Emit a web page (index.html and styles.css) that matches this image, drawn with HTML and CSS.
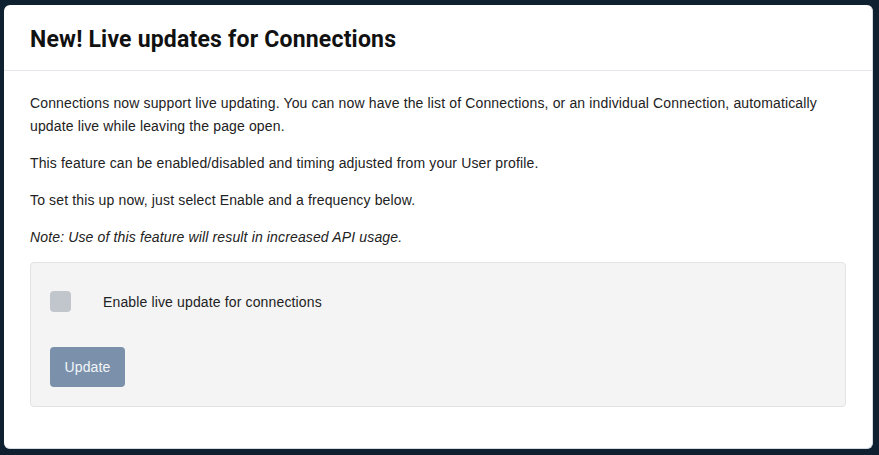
FILE: index.html
```html
<!DOCTYPE html>
<html lang="en">
<head>
    <meta charset="UTF-8">
    <meta name="viewport" content="width=device-width, initial-scale=1.0">
    <title>New! Live updates for Connections</title>
    <link rel="stylesheet" href="styles.css">
</head>
<body>
    <div class="modal">
        <div class="modal-header">
            <h1>New! Live updates for Connections</h1>
        </div>
        <div class="modal-body">
            <p>Connections now support live updating. You can now have the list of Connections, or an individual Connection, automatically update live while leaving the page open.</p>
            <p>This feature can be enabled/disabled and timing adjusted from your User profile.</p>
            <p>To set this up now, just select Enable and a frequency below.</p>
            <p class="note">Note: Use of this feature will result in increased API usage.</p>

            <div class="well">
                <label class="check-row">
                    <span class="checkbox"></span>
                    <span>Enable live update for connections</span>
                </label>
                <button class="btn-update">Update</button>
            </div>
        </div>
    </div>
</body>
</html>
```

FILE: styles.css
```css
body {
    margin: 0;
    padding: 5px 6px 6px 4px;
    background-color: #0f2131;
    font-family: 'Liberation Sans', Arial, sans-serif;
    font-size: 14px;
    letter-spacing: 0.14px;
    color: #222;
}
.modal {
    background-color: #fff;
    border-radius: 6px;
    height: 444px;
    box-sizing: border-box;
    border-right: 1px solid #d5dbe1;
    border-bottom: 1px solid #d5dbe1;
}
.modal-header {
    padding: 0 26px;
    height: 65px;
    border-bottom: 1px solid #e3e7eb;
    display: flex;
    align-items: center;
}
h1 {
    margin: 0;
    padding-top: 3px;
    font-family: Roboto, 'Liberation Sans', sans-serif;
    font-weight: 700;
    font-size: 23px;
    letter-spacing: 0.2px;
    color: #111;
}
.modal-body {
    padding: 21px 26px 0 26px;
}
p {
    margin: 0 0 14px;
    line-height: 23px;
}
.note {
    font-style: italic;
    margin-bottom: 13px;
}
.well {
    background-color: #f4f4f4;
    border: 1px solid #e3e3e3;
    border-radius: 4px;
    padding: 19px;
}
.check-row {
    display: flex;
    align-items: center;
    gap: 32px;
    padding: 9px 0;
    margin-bottom: 26px;
}
.checkbox {
    display: block;
    width: 21px;
    height: 21px;
    border-radius: 4px;
    background-color: #c0c6cc;
}
.btn-update {
    display: block;
    width: 75px;
    height: 40px;
    border: none;
    border-radius: 4px;
    background-color: #7a90ab;
    color: #f3f6f9;
    font-family: 'Liberation Sans', Arial, sans-serif;
    font-size: 14px;
    letter-spacing: 0.14px;
}
```
